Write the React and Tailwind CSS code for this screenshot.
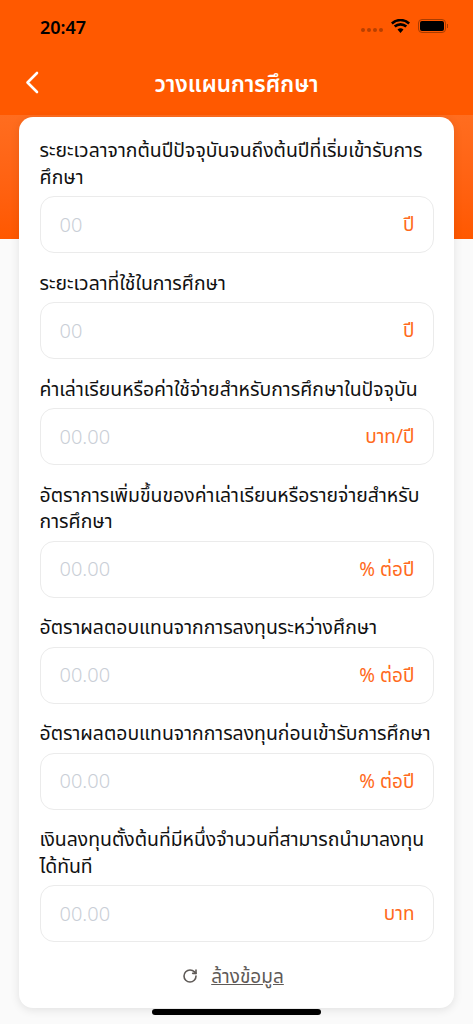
import { RotateCw } from 'lucide-react';

const fields = [
  { label: 'ระยะเวลาจากต้นปีปัจจุบันจนถึงต้นปีที่เริ่มเข้ารับการศึกษา', placeholder: '00', unit: 'ปี' },
  { label: 'ระยะเวลาที่ใช้ในการศึกษา', placeholder: '00', unit: 'ปี' },
  { label: 'ค่าเล่าเรียนหรือค่าใช้จ่ายสำหรับการศึกษาในปัจจุบัน', placeholder: '00.00', unit: 'บาท/ปี' },
  { label: 'อัตราการเพิ่มขึ้นของค่าเล่าเรียนหรือรายจ่ายสำหรับการศึกษา', placeholder: '00.00', unit: '% ต่อปี' },
  { label: 'อัตราผลตอบแทนจากการลงทุนระหว่างศึกษา', placeholder: '00.00', unit: '% ต่อปี' },
  { label: 'อัตราผลตอบแทนจากการลงทุนก่อนเข้ารับการศึกษา', placeholder: '00.00', unit: '% ต่อปี' },
  { label: 'เงินลงทุนตั้งต้นที่มีหนึ่งจำนวนที่สามารถนำมาลงทุนได้ทันที', placeholder: '00.00', unit: 'บาท' },
];

function Field({ label, placeholder, unit }) {
  return (
    <div className="mb-[16.5px]">
      <p className="mb-[6px] text-[19.4px] leading-[26.5px] text-[#111111]">{label}</p>
      <div className="flex h-[57px] items-center justify-between rounded-[14px] border border-[#ebebeb] bg-white pl-[19px] pr-[18px]">
        <span className="text-[20px] font-light text-[#c9ced6]">{placeholder}</span>
        <span className="text-[19px] text-[#ff6a20]">{unit}</span>
      </div>
    </div>
  );
}

export default function App() {
  return (
    <div className="relative h-[1024px] w-[473px] overflow-hidden bg-[#fafafa] font-['Noto_Sans','Noto_Sans_Thai',sans-serif]">
      <div className="absolute inset-x-0 top-[115px] h-[124px] bg-gradient-to-b from-[#ff6d1f] to-[#ff5800]" />

      <div className="relative bg-[#ff5900]">
        <div className="flex h-[52px] items-start justify-between pl-[40px] pr-[25px] pt-[15px]">
          <span className="text-[18px] font-semibold leading-[24px] text-black">20:47</span>
          <div className="flex items-center gap-[8px] pt-[4px]">
            <div className="mt-[7px] flex gap-[2px]">
              <span className="h-[4px] w-[4px] rounded-full bg-[#b84000]" />
              <span className="h-[4px] w-[4px] rounded-full bg-[#b84000]" />
              <span className="h-[4px] w-[4px] rounded-full bg-[#b84000]" />
              <span className="h-[4px] w-[4px] rounded-full bg-[#b84000]" />
            </div>
            <svg width="19" height="14" viewBox="0 0 19 14">
              <path d="M9.5 14l-3-3.4a4.4 4.4 0 0 1 6 0zM4.6 8.6L2.8 6.6a10 10 0 0 1 13.4 0l-1.8 2a7.3 7.3 0 0 0-9.8 0zM1.7 5.4L0 3.5a14 14 0 0 1 19 0l-1.7 1.9a11.5 11.5 0 0 0-15.6 0z" fill="#000" />
            </svg>
            <div className="flex items-center">
              <div className="h-[14px] w-[28px] rounded-[4px] border border-[#a83c00] p-[1px]">
                <div className="h-full w-full rounded-[2px] bg-black" />
              </div>
              <div className="ml-[1px] h-[4px] w-[1px] bg-[#a83c00]" />
            </div>
          </div>
        </div>
        <div className="relative flex h-[63px] items-start justify-center pt-[15px]">
          <svg className="absolute left-[25px] top-[19px]" width="14" height="23" viewBox="0 0 14 23" fill="none">
            <path d="M12 2L2.5 11.5L12 21" stroke="#fff" strokeWidth="2.6" strokeLinecap="round" strokeLinejoin="round" />
          </svg>
          <h1 className="text-[22.5px] font-semibold leading-[34px] text-white">วางแผนการศึกษา</h1>
        </div>
      </div>

      <div className="relative mx-[19px] mt-[2px] h-[891px] rounded-[14px] bg-white px-[20.5px] pt-[20px] shadow-[0_2px_10px_rgba(0,0,0,0.1)]">
        {fields.map((field) => (
          <Field key={field.label} {...field} />
        ))}
        <div className="flex items-center justify-center gap-[13px] pr-[7px] pt-[4px]">
          <RotateCw size={16} strokeWidth={2.4} className="text-[#5f5a57]" />
          <span className="text-[19px] leading-[26px] text-[#5f5a57] underline">ล้างข้อมูล</span>
        </div>
      </div>

      <div className="absolute left-[152px] top-[1009px] h-[6px] w-[169px] rounded-full bg-black" />
    </div>
  );
}
